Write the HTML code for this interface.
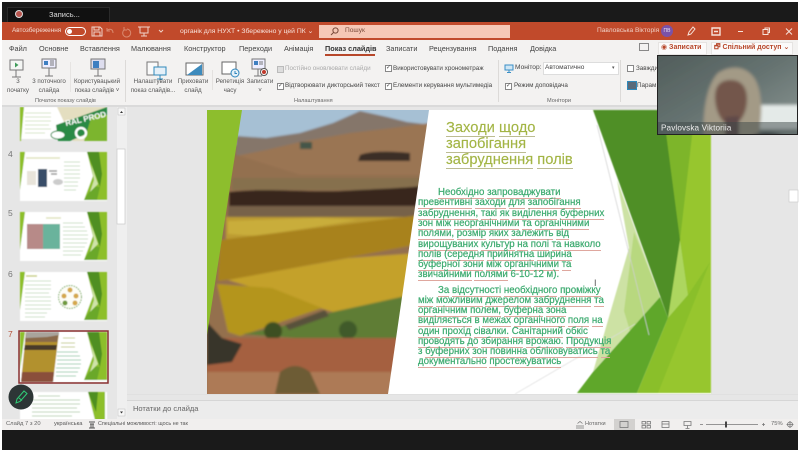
<!DOCTYPE html>
<html lang="uk"><head><meta charset="utf-8"><title>PowerPoint</title>
<style>
html,body{margin:0;padding:0;background:#fff}
#p{position:relative;width:800px;height:452px;overflow:hidden;background:#fff;font-family:"Liberation Sans","DejaVu Sans",sans-serif;filter:blur(.35px)}
#p div{position:absolute;white-space:nowrap}
.t{font-size:7.3px;color:#444}
.s{font-size:6.2px;color:#555;text-align:center;line-height:9px}
.g{font-size:5.6px;color:#666}
.b{font-size:9.7px;color:#3dab70;-webkit-text-stroke:.22px #3dab70;line-height:10px;left:418px}
.b u{text-decoration:none;border-bottom:1px solid #dfa79e;padding-bottom:0}
.h{font-size:14.7px;color:#a3b545;-webkit-text-stroke:.15px #a3b545;left:446px}
.h u{text-decoration:none;border-bottom:1px solid #bcbc92}
.c{width:5px;height:5px;border:1px solid #888;background:#fff;font-size:6px;line-height:5px;text-align:center;color:#444}
.n{font-size:8.5px;color:#777;left:8px}
</style></head><body><div id="p">

<div style="left:2px;top:2px;width:796px;height:20px;background:#1a1a1a"></div>
<div style="left:7px;top:7px;width:101px;height:15px;background:#111;border:1px solid #2a2a2a;border-bottom:0"></div>
<div style="left:15px;top:10px;width:6px;height:6px;border-radius:50%;background:#b9564f;border:1px solid #ddd"></div>
<div style="left:49px;top:10px;font-size:7.5px;color:#ddd">Запись...</div>

<div style="left:2px;top:22px;width:796px;height:18px;background:#c14a2b"></div>
<div style="left:12px;top:27px;font-size:6.4px;color:#f3d9d0">Автозбереження</div>
<div style="left:65px;top:27px;width:19px;height:7px;border:1px solid #fff;border-radius:5px"></div>
<div style="left:67px;top:29px;width:5px;height:5px;border-radius:50%;background:#fff"></div>
<svg style="position:absolute;left:90px;top:25px" width="80" height="13" fill="none" stroke="#f0d3c9" stroke-width="1"><path d="M2 2h8l2 2v7H2zM4 2v3h5V2M4 11V7h6v4"/><path d="M17 6c2-3 6-2 6 2M17 3v3h3" stroke="#d98a70"/><path d="M37 4a4 4 0 1 1-3 1M34 2v3h3" stroke="#d98a70"/><path d="M50 2h8v6h-8zM54 8v3M51 11h6M48 2h12"/><path d="M69 5l2 2 2-2"/></svg>
<div style="left:180px;top:27px;font-size:6.8px;color:#f8e3dc">органік для НУХТ • Збережено у цей ПК ⌄</div>
<div style="left:319px;top:25px;width:191px;height:13px;background:#f6c8b6"></div>
<svg style="position:absolute;left:330px;top:27px" width="9" height="9" fill="none" stroke="#7a4a3a"><circle cx="5.500" cy="3.500" r="2.600"/><path d="M3.500 5.500L1 8"/></svg>
<div style="left:345px;top:27px;font-size:6.6px;color:#7a4a3a">Пошук</div>
<div style="left:597px;top:27px;font-size:6.6px;color:#f0cfc4">Павловська Вікторія</div>
<div style="left:661px;top:25px;width:12px;height:12px;border-radius:50%;background:#7a52a8;color:#e8dff0;font-size:5px;line-height:12px;text-align:center">ПВ</div>
<svg style="position:absolute;left:685px;top:25px" width="110" height="13" fill="none" stroke="#f6e2da" stroke-width="1"><path d="M3 10l1-3 4-5 2 2-4 5zM3 10l3-1"/><path d="M27 3h8v7h-8zM29 6.500h4" stroke-width="1.400"/><path d="M53 6.500h5"/><path d="M78 4.500h5v5h-5zM80 4.500v-1.500h4.500v4.500h-1.500"/><path d="M101 3.500l6 6M107 3.500l-6 6"/></svg>

<div style="left:2px;top:40px;width:796px;height:65px;background:#f3f2f1"></div>
<div class="t" style="left:9px;top:44px">Файл</div>
<div class="t" style="left:39px;top:44px">Основне</div>
<div class="t" style="left:80px;top:44px">Вставлення</div>
<div class="t" style="left:131px;top:44px">Малювання</div>
<div class="t" style="left:184px;top:44px">Конструктор</div>
<div class="t" style="left:239px;top:44px">Переходи</div>
<div class="t" style="left:284px;top:44px">Анімація</div>
<div class="t" style="left:325px;top:44px;font-weight:bold;color:#333">Показ слайдів</div>
<div style="left:325px;top:54px;width:50px;height:1.500px;background:#b7472a"></div>
<div class="t" style="left:386px;top:44px">Записати</div>
<div class="t" style="left:429px;top:44px">Рецензування</div>
<div class="t" style="left:488px;top:44px">Подання</div>
<div class="t" style="left:530px;top:44px">Довідка</div>
<div style="left:639px;top:43px;width:8px;height:6px;border:1px solid #888"></div>
<div style="left:658px;top:42px;width:47px;height:11px;background:#fbfafa;border:1px solid #e6e4e2"></div>
<div style="left:661px;top:43px;font-size:7px;font-weight:bold;color:#b7472a">◉ Записати</div>
<div style="left:711px;top:42px;width:80px;height:11px;background:#fbfafa;border:1px solid #e6e4e2"></div>
<div style="left:714px;top:43px;font-size:7px;font-weight:bold;color:#b7472a">🗗 Спільний доступ ⌄</div>

<svg style="position:absolute;left:0;top:55px" width="345" height="36" fill="none" stroke="#777" stroke-width="1">
<rect x="10" y="5" width="13" height="10" fill="#f4f6f4"/><path d="M16 15v7M12 22h9"/><path d="M15 7.500l3.500 2.500-3.500 2.500z" fill="#3f9b5a" stroke="none"/>
<rect x="42" y="4" width="14" height="9" fill="#eef"/><rect x="44" y="6" width="4" height="4" fill="#3e7fc1" stroke="none"/><path d="M50 6h4M50 8h4M50 10h4M49 13v8M45 21h8"/>
<rect x="91" y="4" width="14" height="10" fill="#dde"/><rect x="93" y="6" width="6" height="7" fill="#3e7fc1" stroke="none"/><path d="M98 14v7M94 21h8"/>
<rect x="147" y="7" width="11" height="13" fill="#fafafa"/><rect x="154" y="12" width="12" height="8" fill="#e5f0f8" stroke="#2f89bb"/><path d="M160 20v4M157 24h6" stroke="#2f89bb"/>
<rect x="186" y="8" width="17" height="12" fill="#fff" stroke="#666"/><path d="M187 20l15-11v11z" fill="#3d8bbd" stroke="none"/>
<rect x="222" y="7" width="14" height="12" fill="#fff" stroke="#666"/><circle cx="235" cy="18" r="4" fill="#e4f0f8" stroke="#2e86bd"/><path d="M235 16v2.500h2" stroke="#2e86bd"/>
<rect x="252" y="4" width="13" height="10" fill="#eef"/><rect x="254" y="6" width="4" height="4" fill="#3e7fc1" stroke="none"/><path d="M259 7h4M259 9h4M258 14v7M254 21h8"/><circle cx="264" cy="17" r="3.500" fill="#fff" stroke="#555"/><circle cx="264" cy="17" r="2" fill="#c0392b" stroke="none"/>
</svg>
<div class="s" style="left:6px;top:77px;width:24px">3<br>початку</div>
<div class="s" style="left:30px;top:77px;width:38px">3 поточного<br>слайда</div>
<div class="s" style="left:71px;top:77px;width:52px">Користувацький<br>показ слайдів ˅</div>
<div class="s" style="left:130px;top:77px;width:46px">Налаштувати<br>показ слайдів...</div>
<div class="s" style="left:177px;top:77px;width:32px">Приховати<br>слайд</div>
<div class="s" style="left:214px;top:77px;width:32px">Репетиція<br>часу</div>
<div class="s" style="left:245px;top:77px;width:30px">Записати<br>˅</div>
<div class="g" style="left:35px;top:98px">Початок показу слайдів</div>
<div class="g" style="left:294px;top:98px">Налаштування</div>
<div class="g" style="left:547px;top:98px">Монітори</div>
<div style="left:125px;top:60px;width:1px;height:42px;background:#dcdad8"></div>
<div style="left:212px;top:70px;width:1px;height:20px;background:#e3e1df"></div>
<div style="left:70px;top:62px;width:1px;height:30px;background:#e6e4e2"></div>
<div style="left:498px;top:60px;width:1px;height:42px;background:#dcdad8"></div>
<div style="left:620px;top:60px;width:1px;height:42px;background:#dcdad8"></div>

<div class="c" style="left:277px;top:66px;background:#ddd;border-color:#bbb"></div>
<div style="left:285px;top:65px;font-size:6.300px;color:#aaa">Постійно оновлювати слайди</div>
<div class="c" style="left:277px;top:83px">✓</div>
<div style="left:285px;top:82px;font-size:6.300px;color:#444">Відтворювати дикторський текст</div>
<div class="c" style="left:385px;top:65px">✓</div>
<div style="left:393px;top:65px;font-size:6.300px;color:#444">Використовувати хронометраж</div>
<div class="c" style="left:385px;top:83px">✓</div>
<div style="left:393px;top:82px;font-size:6.300px;color:#444">Елементи керування мультимедіа</div>
<svg style="position:absolute;left:504px;top:64px" width="11" height="10" fill="none" stroke="#3a8fc6"><rect x="1" y="1" width="8" height="5" fill="#cfe6f4"/><path d="M5 6v2M3 8.500h4"/></svg>
<div style="left:515px;top:64px;font-size:6.600px;color:#444">Монітор:</div>
<div style="left:543px;top:62px;width:74px;height:11px;background:#fff;border:1px solid #ddd"></div>
<div style="left:545px;top:64px;font-size:6.500px;color:#444">Автоматично</div>
<div style="left:612px;top:65px;font-size:5px;color:#555">▾</div>
<div class="c" style="left:505px;top:83px">✓</div>
<div style="left:514px;top:82px;font-size:6.300px;color:#444">Режим доповідача</div>
<div class="c" style="left:627px;top:65px"></div>
<div style="left:636px;top:65px;font-size:6.300px;color:#444">Завжди</div>
<div style="left:627px;top:81px;width:8px;height:7px;background:#5a6a7a;border:1px solid #2f89bb"></div>
<div style="left:637px;top:82px;font-size:6.300px;color:#444">Парам</div>

<div style="left:2px;top:105px;width:796px;height:314px;background:#e6e6e6"></div>
<div style="left:2px;top:105px;width:796px;height:2px;background:#dadada"></div>

<svg style="position:absolute;left:0;top:0" width="800" height="452">
<defs>
<clipPath id="sc"><rect x="0" y="107" width="117" height="312"/></clipPath>
<filter id="bl" x="-5%" y="-5%" width="110%" height="110%"><feGaussianBlur stdDeviation="1"/></filter>
<filter id="bt" x="-5%" y="-5%" width="110%" height="110%"><feGaussianBlur stdDeviation=".5"/></filter>
<filter id="bw" x="-5%" y="-5%" width="110%" height="110%"><feGaussianBlur stdDeviation="1.500"/></filter>
<g id="deco"><path d="M67 0h20v48H64l9-24z" fill="#8dbf2c"/><path d="M67 0h12l3 22-2 13z" fill="#4f8f24"/><path d="M80 35l-3 13H64l9-14z" fill="#6aa82a"/><path d="M0 0h5L0 38z" fill="#8dbf2c"/><path d="M71 12l7 20-8 8 4-12z" fill="#cfe3a8"/></g>
</defs>
<g clip-path="url(#sc)"><g filter="url(#bt)">
<g transform="translate(20,109)"><rect width="87" height="32" y="-2" fill="#fff"/><path d="M37-2h50v34H53z" fill="#e4dec0"/><path d="M36 16l51-18v18L50 32H38z" fill="#2b8a45"/><path d="M72 6h15v26H64z" fill="#7cb52e"/><text x="46" y="17" font-size="8" font-weight="bold" fill="#fff" font-family="Liberation Sans" transform="rotate(-13 46 17)">RAL PROD</text><circle cx="61" cy="24" r="5" fill="none" stroke="#fff" stroke-width="2.500"/><ellipse cx="38" cy="26" rx="7" ry="4" fill="#fff" stroke="#2b8a45"/><path d="M0-2h4L1 32H0z" fill="#8dbf2c"/><path d="M5 4h26M5 8h26M5 12h26M5 16h24M5 20h26M5 24h20" stroke="#d7e5c9"/></g>
<g transform="translate(20,152)"><rect width="87" height="49" fill="#fff"/><use href="#deco"/><path d="M6 6h34" stroke="#e0e3bf" stroke-width="1.500"/><rect x="7" y="19" width="9" height="14" fill="#e8e4da"/><rect x="18" y="17" width="9" height="18" fill="#394e68"/><path d="M29 19h8M31 22h6" stroke="#999" stroke-width="1.500"/><ellipse cx="38" cy="30" rx="5" ry="3" fill="#ccc"/><path d="M44 10h16M44 14h16M44 18h16M44 22h16M44 26h16M44 30h14M44 34h14M44 38h12" stroke="#cfe0c9"/></g>
<g transform="translate(20,212)"><rect width="87" height="49" fill="#fff"/><use href="#deco"/><path d="M26 6h15" stroke="#e0e3bf" stroke-width="1.500"/><rect x="7" y="12" width="33" height="25" fill="#a79a96"/><rect x="22" y="12" width="18" height="25" fill="#6bb39c"/><rect x="7" y="12" width="16" height="25" fill="#b78a88"/><path d="M43 11h20M43 15h22M43 19h24M43 23h25M43 27h25M43 31h24M43 35h22M43 39h20M43 43h18" stroke="#cfe0c9"/></g>
<g transform="translate(20,272)"><rect width="87" height="49" fill="#fff"/><use href="#deco"/><path d="M6 4h11" stroke="#c9ce83" stroke-width="1.500"/><path d="M5 9h26M5 13h26M5 17h26M5 21h24M5 25h26M5 29h26M5 33h26M5 37h26M5 41h22M5 45h20" stroke="#cfe0c9"/><circle cx="50" cy="25" r="11.500" fill="#fdfdf6" stroke="#6aa54f" stroke-dasharray="1.500 1"/><circle cx="50" cy="18" r="2.500" fill="#d4a84c"/><circle cx="44" cy="24" r="2.500" fill="#d4a84c"/><circle cx="56" cy="24" r="2.500" fill="#d4a84c"/><circle cx="45" cy="31" r="2.500" fill="#6f9a3c"/><circle cx="55" cy="31" r="2.500" fill="#d4a84c"/></g>
<g transform="translate(20,332)"><rect width="87" height="50" fill="#fff"/><use href="#deco"/><path d="M6 0h33l-6 50H1z" fill="#b2912f"/><path d="M6 0h33l-2 10H5z" fill="#8a6a48"/><path d="M6 0h33v3l-12 2L6 6z" fill="#a9a49c"/><path d="M5 13h32l-1 5H4z" fill="#4a3a2a"/><path d="M2 40h32l-1 10H1z" fill="#8a4f3a"/><path d="M43 6h12M41 11h14M41 15h14" stroke="#c6cf8c"/><path d="M37 20h21M37 24h23M37 28h24M37 32h24M36 36h24M36 40h22M36 44h20" stroke="#9ed0b2"/></g>
<g transform="translate(20,392)"><rect width="87" height="28" fill="#fff"/><path d="M68 0h17v28H75z" fill="#8dbf2c"/><path d="M68 0h10L76 20z" fill="#4f8f24"/><path d="M18 4h22M12 8h48M12 12h48M12 16h45M12 20h48M12 24h40" stroke="#bcd6b8"/></g>
</g></g>
<rect x="19" y="331" width="89" height="52" fill="none" stroke="#8a3030" stroke-width="1.500"/>

<rect x="207" y="110" width="504" height="284" fill="#fff"/>
<clipPath id="ph"><path d="M207 110H429L388 394H207z"/></clipPath>
<g clip-path="url(#ph)"><g filter="url(#bl)">
<rect x="200" y="105" width="240" height="295" fill="#94704e"/>
<rect x="200" y="105" width="240" height="40" fill="#a6c0d4"/>
<path d="M236 136l30 2 34-5 33-10 27-12 27 6 20 5 25 3v40H236z" fill="#85766a"/>
<path d="M236 156l30-6 34-8 50-9 50-6 30-4v60H236z" fill="#9a7452"/>
<path d="M236 155l-5 40h200v-20H300z" fill="#93704f"/>
<path d="M232 178h200v12H232z" fill="#86704e"/>
<path d="M229 192c30-4 70 0 110-1 40-2 70-3 92-6v22l-60 3-60-3-82 1z" fill="#39281f"/>
<path d="M228 206h205v11H228z" fill="#77624a"/>
<path d="M226 217h210v22H226z" fill="#bc9b30"/>
<path d="M228 221l90-3 40 2-100 16-30-2z" fill="#c9ad3a"/>
<path d="M220 240l216-27v28l-200 38-18 2z" fill="#a8821f"/>
<path d="M228 280l120-22 85-6v40l-100 20z" fill="#c4a12a"/>
<path d="M217 284l55 4 50 20-82 28-12-4z" fill="#b4951e"/>
<path d="M333 312l100-22v60l-35-4-155-12 40-8z" fill="#5f7d35"/>
<path d="M285 325l40-15 4 6-40 14z" fill="#58513a"/>
<circle cx="273" cy="331" r="9" fill="#3e4f24"/><circle cx="348" cy="330" r="9" fill="#3f5a2c"/>
<path d="M207 338h190v20l-10 40H207z" fill="#a5603f"/>
<path d="M207 372h185v24H207z" fill="#ad7a56"/>
<path d="M207 322l15 16 20 6-10 18-25 3z" fill="#38352a"/>
<path d="M280 372c10-8 20-8 30 0l10 22H275z" fill="#6d5c36"/>
<path d="M300 142h12v7h-12z" fill="#445648"/>
<path d="M360 155c10-4 30-4 50-2v8h-52z" fill="#3a2e26"/>
</g></g>
<path d="M207 110h35l-35 225z" fill="#8dbe2d"/>

<g filter="url(#bt)">
<path d="M663 110h48v283H640l28-75z" fill="#97c62e"/>
<path d="M663 110h32l-15 130 8 55-20 23z" fill="#7db52c"/>
<path d="M593 110h70l17 130-12 78z" fill="#4f8f26"/>
<path d="M680 240l8 55-20 23z" fill="#add65e"/>
<path d="M617 180l43 117-67 75 36-124z" fill="#cde2a4"/>
<path d="M634 232l26 65-30 34-6-20z" fill="#b8d87f"/>
<path d="M660 297l8 21-31 75H577l16-21z" fill="#5ea72a"/>
<path d="M668 318l-31 75h21l52-131-22 33z" fill="#8abf2c"/>
<path d="M597 125l30 120 22 90" stroke="#cfcfcf" stroke-width=".7" fill="none"/>
<path d="M515 394l120-70" stroke="#dcdcdc" stroke-width=".7" fill="none"/>
</g>
<rect x="117" y="107" width="10" height="312" fill="#efefef"/>
<rect x="117" y="149" width="8" height="75" fill="#fff" stroke="#c8c8c8" stroke-width=".7"/>
<rect x="118" y="108" width="7" height="7" fill="#f7f7f7" stroke="#bbb" stroke-width=".5"/><path d="M120 113l1.500-2 1.500 2z" fill="#333"/>
<rect x="118" y="409" width="7" height="7" fill="#f7f7f7" stroke="#bbb" stroke-width=".5"/><path d="M120 411.500l1.500 2 1.500-2z" fill="#333"/>
<rect x="789" y="190" width="9" height="12" fill="#fff" stroke="#ccc" stroke-width=".7"/>
<rect x="127" y="394" width="671" height="1" fill="#e0e0e0"/>
<rect x="127" y="400" width="671" height="19" fill="#ececec"/>
<rect x="127" y="400" width="671" height="1" fill="#d6d6d6"/>
<circle cx="21" cy="397" r="12.500" fill="#2d3636"/>
<path d="M16 403l1-4 7-8 3 2.500-7 8z M19 398l3 2.500" fill="none" stroke="#2fcf77" stroke-width="1"/>
</svg>

<div class="n" style="top:149px">4</div>
<div class="n" style="top:208px">5</div>
<div class="n" style="top:269px">6</div>
<div class="n" style="top:329px;color:#b5533a">7</div>

<div style="left:133px;top:404px;font-size:7.5px;color:#666">Нотатки до слайда</div>

<div class="h" style="top:120px"><u>Заходи</u> <u>щодо</u></div>
<div class="h" style="top:136px"><u>запобігання</u></div>
<div class="h" style="top:152px"><u>забруднення</u> <u>полів</u></div>

<div class="b" style="top:188px;left:438px"><u>Необхідно</u> <u>запроваджувати</u></div>
<div class="b" style="top:198.300px"><u>превентивні</u> <u>заходи</u> <u>для</u> <u>запобігання</u></div>
<div class="b" style="top:208.600px"><u>забруднення,</u> <u>такі</u> <u>як</u> <u>виділення</u> <u>буферних</u></div>
<div class="b" style="top:218.900px"><u>зон</u> <u>між</u> <u>неорганічними</u> <u>та</u> <u>органічними</u></div>
<div class="b" style="top:229.200px"><u>полями,</u> <u>розмір</u> <u>яких</u> <u>залежить</u> <u>від</u></div>
<div class="b" style="top:239.500px"><u>вирощуваних</u> <u>культур</u> <u>на</u> <u>полі</u> <u>та</u> <u>навколо</u></div>
<div class="b" style="top:249.800px"><u>полів</u> (<u>середня</u> <u>прийнятна</u> <u>ширина</u></div>
<div class="b" style="top:260px"><u>буферної</u> <u>зони</u> <u>між</u> <u>органічними</u> <u>та</u></div>
<div class="b" style="top:270.300px"><u>звичайними</u> <u>полями</u> 6-10-12 м).</div>
<div class="b" style="top:285.500px;left:438px"><u>За</u> <u>відсутності</u> <u>необхідного</u> <u>проміжку</u></div>
<div class="b" style="top:295.800px"><u>між</u> <u>можливим</u> <u>джерелом</u> <u>забруднення</u> <u>та</u></div>
<div class="b" style="top:306px"><u>органічним</u> <u>полем,</u> <u>буферна</u> <u>зона</u></div>
<div class="b" style="top:316.300px"><u>виділяється</u> в <u>межах</u> <u>органічного</u> <u>поля</u> <u>на</u></div>
<div class="b" style="top:326.600px"><u>один</u> <u>прохід</u> <u>сівалки.</u> <u>Санітарний</u> <u>обкіс</u></div>
<div class="b" style="top:336.800px"><u>проводять</u> <u>до</u> <u>збирання</u> <u>врожаю.</u> <u>Продукція</u></div>
<div class="b" style="top:347.100px">з <u>буферних</u> <u>зон</u> <u>повинна</u> <u>обліковуватись</u> <u>та</u></div>
<div class="b" style="top:357.300px"><u>документально</u> <u>простежуватись</u></div>
<div style="left:594px;top:278px;font-size:9px;color:#555">I</div>

<svg style="position:absolute;left:657px;top:55px" width="143" height="81">
<defs><linearGradient id="w" x1="0" y1="0" x2="1" y2="1"><stop offset="0" stop-color="#4f5b59"/><stop offset=".5" stop-color="#667371"/><stop offset="1" stop-color="#8f9a97"/></linearGradient>
<clipPath id="wc"><rect x="1" y="1" width="139" height="78"/></clipPath></defs>
<rect x="0" y="0" width="141" height="80" fill="#222"/>
<g clip-path="url(#wc)"><g filter="url(#bw)">
<rect x="-5" y="-5" width="150" height="90" fill="url(#w)"/>
<rect x="103" y="50" width="40" height="24" fill="#e4eae8"/>
<path d="M47 85c-2-25 2-55 14-67 12-8 28-8 37 6 8 14 8 40 2 61z" fill="#a39a86"/>
<path d="M58 42c0-12 6-17 16-17s16 7 16 19c0 14-7 26-16 26-9 0-16-14-16-28z" fill="#73574c"/>
<path d="M68 62l14-1v24H68z" fill="#5f4848"/>
<path d="M92 85c4-8 20-12 40-2l2 4z" fill="#35383d"/>
</g></g>
<rect x="1" y="67" width="139" height="12" fill="#3e4748" opacity=".5"/>
<text x="4" y="75.500" font-size="8.200" fill="#eee" font-family="Liberation Sans" letter-spacing=".1">Pavlovska Viktoriia</text>
</svg>

<div style="left:2px;top:419px;width:796px;height:11px;background:#f1efee"></div>
<div style="left:6px;top:421px;font-size:5.800px;color:#666">Слайд 7 з 20</div>
<div style="left:54px;top:421px;font-size:5.800px;color:#555">українська</div>
<svg style="position:absolute;left:88px;top:420px" width="10" height="9" fill="none" stroke="#555"><path d="M1 2h6M2 4h4M3 4v4M5 4v4M1 8h6"/></svg>
<div style="left:98px;top:421px;font-size:5.400px;color:#555">Спеціальні можливості: щось не так</div>
<svg style="position:absolute;left:572px;top:419px" width="228" height="11" fill="none" stroke="#777" stroke-width=".8">
<path d="M4 7h8M4 9h8M5.500 4.500l2.500-2 2.500 2"/>
<rect x="42" y="0" width="21" height="11" fill="#d3d1cf" stroke="none"/><rect x="48" y="2.500" width="8" height="6"/>
<rect x="70" y="2.500" width="3.500" height="2.500"/><rect x="75" y="2.500" width="3.500" height="2.500"/><rect x="70" y="6.500" width="3.500" height="2.500"/><rect x="75" y="6.500" width="3.500" height="2.500"/>
<rect x="90" y="2.500" width="7" height="6"/><path d="M90 5h7"/>
<path d="M112 2.500h7v4h-7zM115.500 6.500v3M113.500 9.500h4"/>
<path d="M128 5.500h3M134 5.500h52M190 5.500h3M191.500 4v3"/><rect x="153" y="2.500" width="2" height="6" fill="#444" stroke="none"/>
<path d="M218 2v7M214.500 5.500h7"/><circle cx="218" cy="5.500" r="2.500"/>
</svg>
<div style="left:585px;top:421px;font-size:5.600px;color:#666">Нотатки</div>
<div style="left:771px;top:421px;font-size:5.800px;color:#666">75%</div>
<div style="left:2px;top:430px;width:796px;height:20px;background:#1a1a1a"></div>
</div></body></html>
